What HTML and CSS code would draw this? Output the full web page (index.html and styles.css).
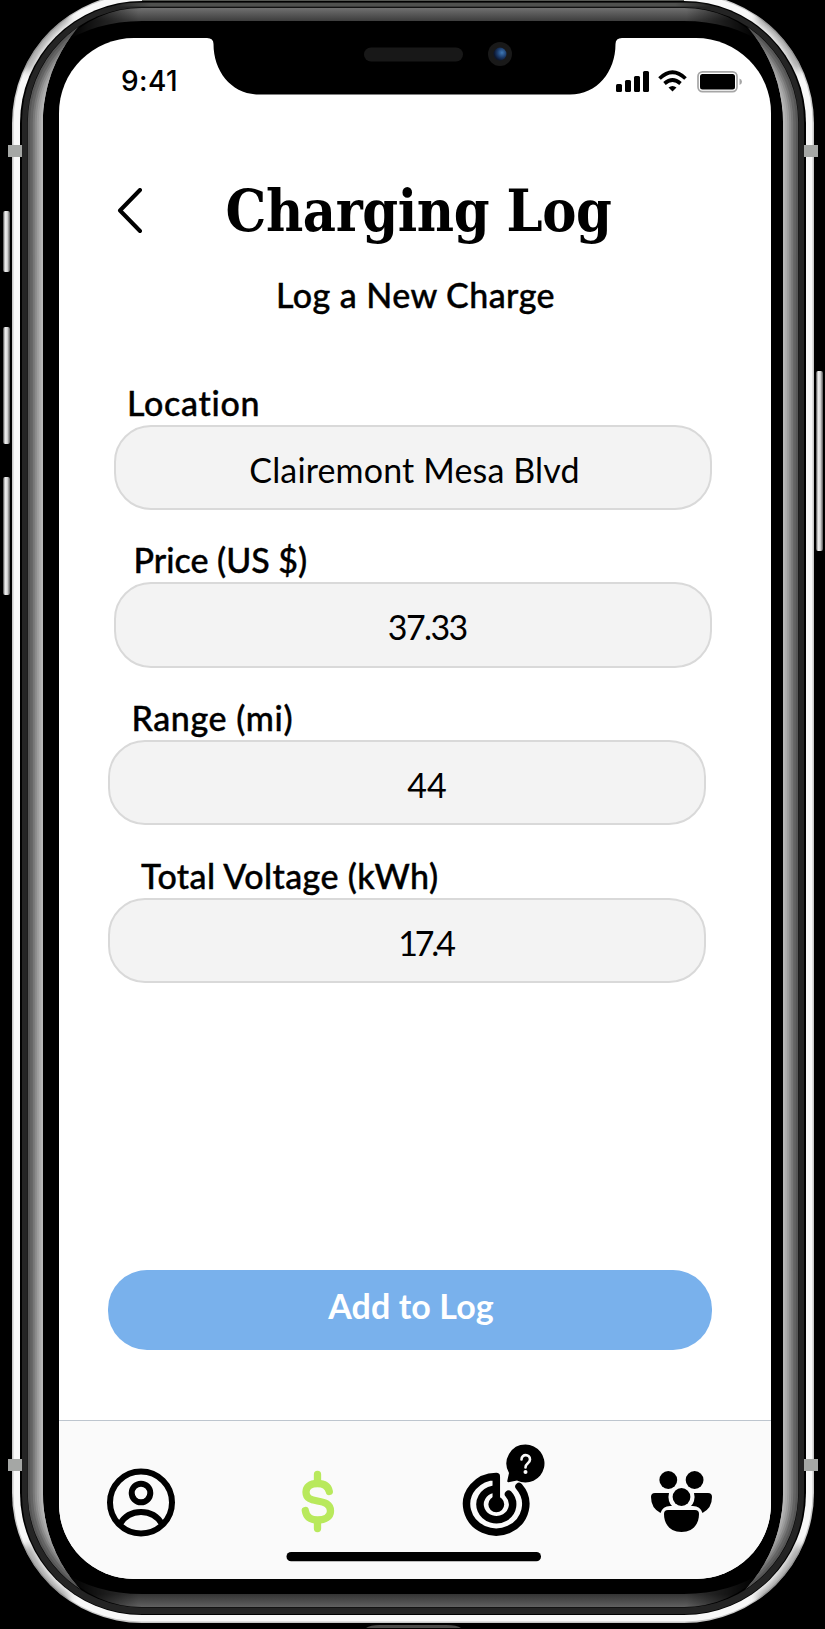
FILE: index.html
```html
<!DOCTYPE html>
<html lang="en">
<head>
<meta charset="utf-8">
<title>Charging Log</title>
<link rel="stylesheet" href="styles.css">
</head>
<body>
<main class="device">
  <svg class="frame" viewBox="0 0 825 1629" aria-hidden="true">
    <defs>
      <linearGradient id="topBand" x1="0" y1="8" x2="0" y2="21" gradientUnits="userSpaceOnUse"><stop offset="0" stop-color="#707070"/><stop offset="1" stop-color="#3d3d3d"/></linearGradient>
      <linearGradient id="botBand" x1="0" y1="1594" x2="0" y2="1607" gradientUnits="userSpaceOnUse"><stop offset="0" stop-color="#343434"/><stop offset="1" stop-color="#606060"/></linearGradient>
      <linearGradient id="fade" x1="70" y1="0" x2="755" y2="0" gradientUnits="userSpaceOnUse"><stop offset="0" stop-color="#000"/><stop offset=".1" stop-color="#fff"/><stop offset=".9" stop-color="#fff"/><stop offset="1" stop-color="#000"/></linearGradient>
      <linearGradient id="rim" x1="115" y1="0" x2="711" y2="0" gradientUnits="userSpaceOnUse"><stop offset="0" stop-color="#4f504e" stop-opacity="0"/><stop offset=".06" stop-color="#4f504e"/><stop offset=".94" stop-color="#4f504e"/><stop offset="1" stop-color="#4f504e" stop-opacity="0"/></linearGradient>
      <linearGradient id="key" x1="0" x2="1" y1="0" y2="0"><stop offset="0" stop-color="#444"/><stop offset=".3" stop-color="#eee"/><stop offset=".6" stop-color="#ddd"/><stop offset="1" stop-color="#555"/></linearGradient>
      <radialGradient id="lens" cx=".65" cy=".4" r=".6"><stop offset="0" stop-color="#3f78b5"/><stop offset=".6" stop-color="#1b3a69"/><stop offset="1" stop-color="#0c1730"/></radialGradient>
      <mask id="fadeMask"><rect width="825" height="1629" fill="url(#fade)"/></mask>
      <filter id="soft" x="-50%" y="-50%" width="200%" height="200%"><feGaussianBlur stdDeviation="4"/></filter>
      <clipPath id="ringClip"><path clip-rule="evenodd" d="M12 123A130 130 0 0 1 142-7H684A130 130 0 0 1 814 123V1493A130 130 0 0 1 684 1623H142A130 130 0 0 1 12 1493ZM20 123V1493A122 122 0 0 0 142 1615H684A122 122 0 0 0 806 1493V123A122 122 0 0 0 684 1H142A122 122 0 0 0 20 123Z"/></clipPath>
      <clipPath id="sides"><path d="M22 0H90L85 20C58 47 43 85 43 122V1494C43 1531 58 1567 84 1593L90 1629H22ZM804 0H736L741 20C768 47 783 85 783 122V1494C783 1531 768 1567 742 1593L736 1629H804Z"/></clipPath>
    </defs>
    <rect x="3" y="211" width="7" height="61" rx="2" fill="url(#key)"/>
    <rect x="3" y="327" width="7" height="117" rx="2" fill="url(#key)"/>
    <rect x="3" y="477" width="7" height="118" rx="2" fill="url(#key)"/>
    <rect x="816" y="371" width="7" height="180" rx="2" fill="url(#key)"/>
    <rect x="12" y="-7" width="802" height="1630" rx="130" fill="#c9c9c9"/>
    <rect x="13.500" y="-5.500" width="799" height="1627" rx="128" fill="#f8f8f8"/>
    <g clip-path="url(#ringClip)"><g filter="url(#soft)" fill="none" stroke="#555" stroke-width="5"><path d="M26 70Q40 36 68 16"/><path d="M800 70Q786 36 758 16"/><path d="M26 1546Q40 1580 68 1600"/><path d="M800 1546Q786 1580 758 1600"/></g></g>
    <rect x="20" y="1" width="786" height="1614" rx="122" fill="#000"/>
    <rect x="22" y="2.500" width="782" height="1611.500" rx="119" fill="#242424"/>
    <rect x="142" y="0" width="542" height="1" fill="#555753"/>
    <rect x="115" y="2.800" width="596" height="3.700" fill="url(#rim)"/>
    <rect x="27.500" y="7.500" width="771" height="1600" rx="114" fill="#000"/>
    <path d="M60 45Q95 8 142 8H684Q731 8 766 45Q731 21 684 21H142Q95 21 60 45Z" fill="url(#topBand)" mask="url(#fadeMask)"/>
    <path d="M60 1570Q95 1607 142 1607H684Q731 1607 766 1570Q731 1594 684 1594H142Q95 1594 60 1570Z" fill="url(#botBand)" mask="url(#fadeMask)"/>
    <g clip-path="url(#sides)" fill="none" stroke-width="3.500">
      <rect x="43.500" y="23.500" width="739" height="1568" rx="98.500" stroke="#bdbdbd" stroke-width="5"/>
      <rect x="41" y="21" width="744" height="1573" rx="101" stroke="#b6b6b6"/>
      <rect x="39" y="19" width="748" height="1577" rx="103" stroke="#aaa"/>
      <rect x="37" y="17" width="752" height="1581" rx="105" stroke="#9c9c9c"/>
      <rect x="35" y="15" width="756" height="1585" rx="107" stroke="#8a8a8a"/>
      <rect x="33" y="13" width="760" height="1589" rx="109" stroke="#777"/>
      <rect x="31" y="11" width="764" height="1593" rx="111" stroke="#646464"/>
      <rect x="29" y="9" width="768" height="1597" rx="113" stroke="#565656" stroke-width="2.300"/>
    </g>
    <path d="M8 145h14v12H8zM804 145h14v12h-14zM8 1459h14v12H8zM804 1459h14v12h-14z" fill="#a5a7a5"/>
    <path d="M366 1628Q370 1625 380 1625H446Q457 1625 461 1628Z" fill="#4d4c4a"/>
  </svg>
  <section class="screen">
    <svg class="notch" viewBox="0 0 416 57" aria-hidden="true">
      <path d="M0 0Q6.500 0 6.500 6C6.500 34 25 56.500 52 56.500H363C390 56.500 408.500 34 408.500 6Q408.500 0 415 0Z"/>
      <rect x="157" y="9.500" width="99" height="14" rx="7" fill="#181818"/>
      <circle cx="293" cy="16" r="12" fill="#191919"/>
      <circle cx="293" cy="16" r="6.500" fill="url(#lens)"/>
    </svg>
    <header class="status">
      <span class="clock">9:41</span>
      <svg class="signals" viewBox="0 0 128 24" aria-hidden="true">
        <rect x="0" y="14" width="6" height="8" rx="1.500"/><rect x="9" y="10" width="6" height="12" rx="1.500"/><rect x="18" y="6" width="6" height="16" rx="1.500"/><rect x="27" y="1" width="6" height="21" rx="1.500"/>
        <path d="M43.500 8.500Q56.500-4 69.500 8.500M48.500 13.500Q56.500 6.500 64.500 13.500" fill="none" stroke="#000" stroke-width="3.700"/>
        <path d="M52.500 17.500Q56.500 14.500 60.500 17.500L56.500 21.500Z"/>
        <rect x="82" y="1.800" width="39" height="19.800" rx="4.500" fill="none" stroke="#a6a6a6" stroke-width="1.700"/>
        <rect x="84" y="4" width="35" height="15.500" rx="2.500"/>
        <path d="M123.500 8.500Q126 9.500 126 11.700T123.500 15Z" fill="#a6a6a6"/>
      </svg>
    </header>
    <div class="heading">
      <svg class="back" viewBox="0 0 26 46" aria-label="Back"><path d="M23 2L3 22.500L23 43" fill="none" stroke="#000" stroke-width="4" stroke-linecap="round" stroke-linejoin="round"/></svg>
      <h1 class="title">Charging Log</h1>
    </div>
    <h2 class="subtitle">Log a New Charge</h2>
    <form class="fields">
      <div class="field field-location"><label class="label">Location</label><div class="value">Clairemont Mesa Blvd</div></div>
      <div class="field field-price"><label class="label">Price (US $)</label><div class="value">37.33</div></div>
      <div class="field field-range"><label class="label">Range (mi)</label><div class="value">44</div></div>
      <div class="field field-voltage"><label class="label">Total Voltage (kWh)</label><div class="value">17.4</div></div>
    </form>
    <button class="submit" type="button">Add to Log</button>
    <nav class="tabs">
      <svg class="tab-icons" viewBox="59 1421 712 158" aria-hidden="true">
        <g fill="none" stroke="#000" stroke-width="6"><circle cx="141" cy="1502.500" r="31"/><circle cx="141" cy="1493" r="9.300"/><path d="M120 1524Q127 1512 141 1512T162 1524"/></g>
        <path d="M317.500 1474.500V1482M317.500 1522V1528.500" stroke="#b8e95c" stroke-width="7.300" stroke-linecap="round"/>
        <path d="M329.300 1491.500C328 1485.500 323.500 1483.500 317.500 1483.500C310 1483.500 306 1487 306 1492C306 1498.500 311 1499.800 317.500 1501C325 1502.300 330.500 1504 330.500 1511C330.500 1517 325 1520 317.500 1520C310.500 1520 306.300 1517 305.300 1510.500" fill="none" stroke="#b8e95c" stroke-width="7.300" stroke-linecap="round"/>
        <g fill="none" stroke="#000" stroke-width="7.500" stroke-linecap="round" stroke-linejoin="round">
          <path d="M519 1486.500A29.600 27.800 0 1 1 496.300 1476.400V1504"/>
          <path d="M508.500 1494.200A16.300 15.300 0 1 1 493 1489.400"/>
          <circle cx="496.300" cy="1504.300" r="4.200"/>
        </g>
        <path d="M525.500 1444.500a19 19 0 1 1-8.500 36l-8.500 1.700q-1.500 0-1.200-1.500l1.700-7.700a19 19 0 0 1 16.500-28.500Z"/>
        <path d="M521.500 1459.500C521.500 1453.500 530 1453.800 530 1459.500C530 1463.500 525.500 1463 525.500 1467.500" fill="none" stroke="#fafafa" stroke-width="2.600" stroke-linecap="round"/><circle cx="525.500" cy="1472" r="2" fill="#fafafa"/>
        <circle cx="668.300" cy="1480" r="8.900"/><circle cx="694.600" cy="1480" r="8.900"/><circle cx="681.500" cy="1497" r="8.900"/>
        <path d="M655 1493H669Q668 1496 669 1501Q670 1504 672 1506Q663 1505 660.500 1513Q651 1508 651 1497Q651 1493 655 1493ZM708 1493H694Q695 1496 694 1501Q693 1504 691 1506Q700 1505 702.500 1513Q712 1508 712 1497Q712 1493 708 1493Z"/>
        <path d="M668 1510H695Q699 1510 699 1514C699 1525 692 1532 681.500 1532S664 1525 664 1514Q664 1510 668 1510Z"/>
        <rect x="286.500" y="1552" width="254.500" height="9.300" rx="4.600"/>
      </svg>
    </nav>
  </section>
</main>
</body>
</html>
```
FILE: styles.css
```css
* { box-sizing: border-box; }
body { margin: 0; background: #000; font-family: Lato, "Open Sans", sans-serif; font-variant-ligatures: none; color: #000; }
.device { position: relative; width: 825px; height: 1629px; overflow: hidden; padding: 37.5px 54px 50px 59px; background: #000; }
.frame { position: absolute; inset: 0; width: 825px; height: 1629px; }
.screen { position: relative; display: flex; flex-direction: column; width: 712px; height: 1541.5px; overflow: hidden; border-radius: 75px; background: #fff; }
.notch { position: absolute; left: 148px; top: 0; width: 416px; height: 57px; }
.status { display: flex; justify-content: space-between; height: 92px; padding: 28px 27px 0 62px; }
.clock { font: 500 28px/30px Inter, sans-serif; letter-spacing: .4px; }
.signals { width: 128px; height: 24px; margin-top: 4px; }
.heading { display: flex; align-items: flex-start; height: 94px; margin-top: 20px; padding-left: 58px; }
.back { width: 26px; height: 46px; margin-top: 38px; }
.title { margin: 14px 0 0 82.5px; font: bold 57px/94px "DejaVu Serif Condensed", "DejaVu Serif", serif; font-stretch: condensed; letter-spacing: -.4px; white-space: nowrap; }
.subtitle { height: 44px; margin: 29.5px 0 0 217px; font-size: 34px; line-height: 44px; font-weight: 500; letter-spacing: .45px; white-space: nowrap; -webkit-text-stroke: .4px #000; }
.fields { display: flex; flex-direction: column; margin-top: 65.5px; }
.field { width: 598px; height: 157.7px; margin-left: 55px; }
.field-range, .field-voltage { margin-left: 49px; }
.label { display: block; height: 42px; padding-left: 13px; font-size: 34px; line-height: 40px; font-weight: 500; white-space: nowrap; -webkit-text-stroke: .4px #000; }
.value { height: 85.5px; border: 2px solid #d9d9d9; border-radius: 37px; background: #f3f3f3; text-align: center; font-size: 34px; line-height: 86px; letter-spacing: .15px; white-space: nowrap; }
.field-location .label { letter-spacing: .7px; }
.field-location .value { padding-left: 3px; }
.field-price .label { padding-left: 19.5px; }
.field-price .value { padding-left: 28.5px; letter-spacing: -1.6px; }
.field-range .label { padding-left: 23.5px; letter-spacing: .6px; }
.field-range .value { padding-left: 40px; }
.field-voltage .label { padding-left: 33px; letter-spacing: .4px; }
.field-voltage .value { padding-left: 37px; letter-spacing: -3.2px; }
.submit { flex: none; width: 604px; height: 80px; margin: 256.5px 0 0 49px; padding: 0 0 8px 2px; border: 0; border-radius: 39px; background: #79b1ec; color: #fff; font: bold 34px/70px Lato, sans-serif; letter-spacing: .1px; }
.tabs { width: 712px; height: 159px; margin-top: auto; border-top: 1px solid #bdc5ce; background: #fafafa; }
.tab-icons { display: block; width: 712px; height: 158px; }
```
